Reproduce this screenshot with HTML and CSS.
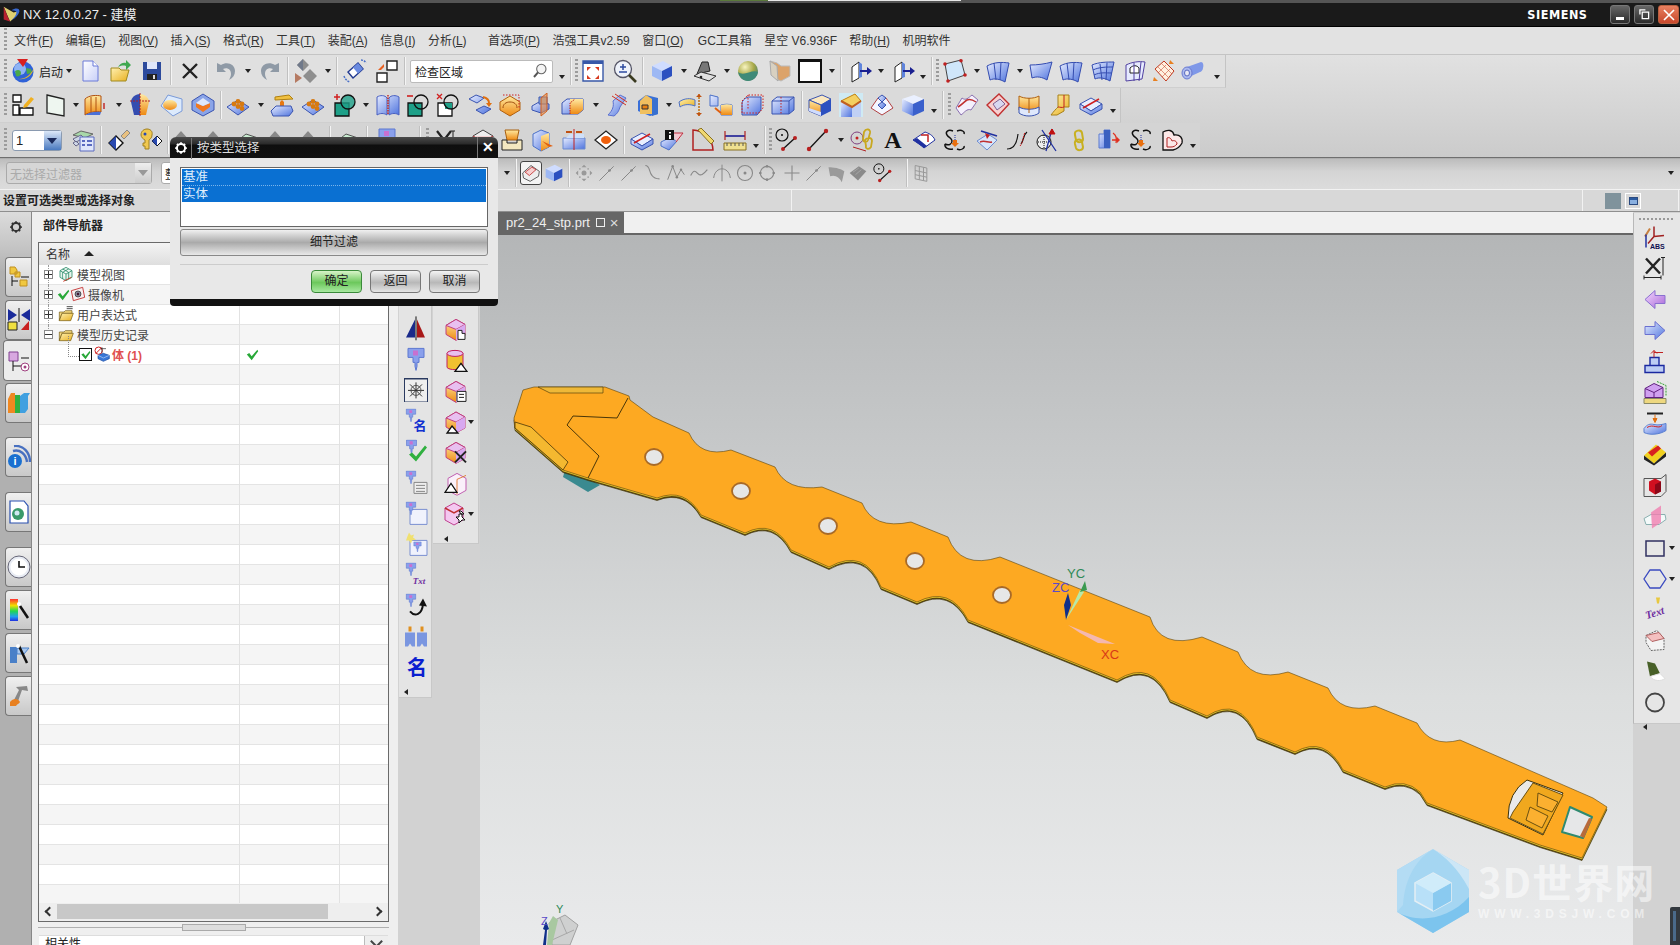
FILE: index.html
```html
<!DOCTYPE html>
<html lang="zh"><head><meta charset="utf-8"><title>NX 12 - 建模</title><link rel="stylesheet" href="styles.css"></head>
<body>
<svg class="defs" aria-hidden="true">
<defs>
<linearGradient id="gb" x1="0" y1="0" x2="1" y2="1"><stop offset="0" stop-color="#e6ecff"/><stop offset="1" stop-color="#4f74de"/></linearGradient>
<linearGradient id="gl" x1="0" y1="0" x2="1" y2="1"><stop offset="0" stop-color="#fff"/><stop offset="1" stop-color="#c8d0f8"/></linearGradient>
<linearGradient id="go" x1="0" y1="0" x2="0" y2="1"><stop offset="0" stop-color="#ffe9a0"/><stop offset="1" stop-color="#ee8a14"/></linearGradient>
<linearGradient id="gp" x1="0" y1="0" x2="1" y2="1"><stop offset="0" stop-color="#f4d8ff"/><stop offset="1" stop-color="#a868d8"/></linearGradient>
<linearGradient id="gf" x1="0" y1="0" x2="1" y2="1"><stop offset="0" stop-color="#fff0b0"/><stop offset="1" stop-color="#e8b020"/></linearGradient>
<linearGradient id="gr" x1="0" y1="0" x2="0" y2="1"><stop offset="0" stop-color="#ff3030"/><stop offset=".3" stop-color="#f0e000"/><stop offset=".55" stop-color="#20d850"/><stop offset=".8" stop-color="#20a0f0"/><stop offset="1" stop-color="#2030e0"/></linearGradient>
<radialGradient id="gs" cx=".35" cy=".3" r=".8"><stop offset="0" stop-color="#f8f4c0"/><stop offset=".55" stop-color="#a8a848"/><stop offset="1" stop-color="#3a7a70"/></radialGradient>
</defs>
<symbol id="globe" viewBox="0 0 24 24"><circle cx="12" cy="13" r="10.500" fill="#2f62d8"/><circle cx="9" cy="10" r="6" fill="#8fb4f4"/><path d="M4 12c3-2 6-1 6 2s-3 4-5 3zM15 9l5 1 1 4-5 1z" fill="#4aa84a"/><path d="M1 17c6 6 17 3 22-8-3 12-15 14-22 8z" fill="#f0c020"/><path d="M6 0h11l-5 8z" fill="#d82020"/></symbol>
<symbol id="doc" viewBox="0 0 24 24"><path d="M5 2h10l5 5v15H5z" fill="url(#gl)" stroke="#6a7ad8"/><path d="M15 2v5h5" fill="#fff" stroke="#6a7ad8"/></symbol>
<symbol id="folder" viewBox="0 0 24 24"><path d="M2 9h8l2 2h8l-3 11H2z" fill="url(#gf)" stroke="#a08a20"/><path d="M9 8c2-4 6-5 8-4V1l5 5-5 5V7c-3-1-6 0-8 1z" fill="#40a850"/></symbol>
<symbol id="fold0" viewBox="0 0 24 24"><path d="M2 9h7l2-2h10v4H6L2 22z" fill="#f4d880" stroke="#705810"/><path d="M6 11h17l-4 11H2z" fill="url(#gf)" stroke="#705810"/></symbol>
<symbol id="fold1" viewBox="0 0 24 24"><use href="#fold0"/><path d="M13 1h9M13 4h9" stroke="#333" stroke-width="1.300"/></symbol>
<symbol id="mv" viewBox="0 0 24 24"><path d="M12 2 21 7v10l-9 5-9-5V7zM3 7l9 5 9-5M12 12v10M7 4.500l9 5v10M16 4.500l-9 5v10" fill="#e4f4ec" stroke="#2a8a68" stroke-width="1.200"/><path d="M8 23 20 17" stroke="#d03020" stroke-width="1.400"/></symbol>
<symbol id="cam" viewBox="0 0 24 24"><path d="M2 7 19 2l3 15-17 5z" fill="#f8f0f0" stroke="#c02828" stroke-width="1.300"/><circle cx="12" cy="12" r="4.500" fill="#8a8a9a" stroke="#222"/><circle cx="12" cy="12" r="1.800" fill="#401830"/></symbol>
<symbol id="bdy" viewBox="0 0 24 24"><circle cx="7" cy="7" r="5.500" fill="#fff" stroke="#d02020" stroke-width="1.500"/><path d="M3 11 11 3" stroke="#d02020" stroke-width="1.500"/><path d="M12 2v8M10 4h8" stroke="#222"/><path d="M6 14l8-3 9 3v5l-9 4-8-4z" fill="#3a78d8" stroke="#1a4aa0"/><path d="M6 14l8 4 9-4" stroke="#bcd4f8" fill="none"/></symbol>
<symbol id="save" viewBox="0 0 24 24"><path d="M3 3h18v18H3z" fill="#2c4a9c"/><path d="M7 3h10v7H7z" fill="#dfe6fa"/><path d="M7 15h10v6H7z" fill="#222"/><path d="M13 16h2v4h-2z" fill="#ddd"/></symbol>
<symbol id="xx" viewBox="0 0 24 24"><path d="M5 5l14 14M19 5 5 19" stroke="#222" stroke-width="2.400" fill="none"/></symbol>
<symbol id="undo" viewBox="0 0 24 24"><path d="M3 4v9h9l-3-3c4-2 8 0 8 5 0 2-1 4-2 6 4-2 6-5 6-9 0-7-8-10-14-6z" fill="#8f9aa6"/></symbol>
<symbol id="redo" viewBox="0 0 24 24"><path d="M21 4v9h-9l3-3c-4-2-8 0-8 5 0 2 1 4 2 6-4-2-6-5-6-9 0-7 8-10 14-6z" fill="#8f9aa6"/></symbol>
<symbol id="snap" viewBox="0 0 24 24"><path d="M9 0l6 6-6 6-6-6zM16 10l7 7-7 7-7-7z" fill="#8e8e8e"/><path d="M1 14l7 5-7 5z" fill="#b57a62"/><path d="M9 0v12L3 6z" fill="#70798a"/></symbol>
<symbol id="iso" viewBox="0 0 24 24"><path d="M5 13 15 4l5 6-10 9z" fill="#fff" stroke="#223a90" stroke-width="1.400"/><path d="M10 8.500 15 4l5 6-5 4.500z" fill="#6a8ae0"/><path d="M1 17c1 3 3 5 6 6M18 1c2 0 4 1 5 3" stroke="#4a70c8" stroke-width="1.500" stroke-dasharray="2 1" fill="none"/></symbol>
<symbol id="win2" viewBox="0 0 24 24"><path d="M12 2h10v9H12zM2 14h10v9H2z" fill="#fff" stroke="#222" stroke-width="1.400"/><path d="M3 11 9 5v3l-3 3z" fill="#e86020"/></symbol>
<symbol id="mag" viewBox="0 0 24 24"><circle cx="14" cy="9" r="7" fill="#f4f4f4" stroke="#666" stroke-width="1.600"/><path d="M9 14 3 21" stroke="#555" stroke-width="3"/></symbol>
<symbol id="fit" viewBox="0 0 24 24"><path d="M2 2h20v20H2z" fill="#fff" stroke="#3858a8" stroke-width="1.400"/><path d="M2 2h20v3H2z" fill="#3858a8"/><path d="M6 8h4L6 12zM18 8h-4l4 4zM6 20h4l-4-4zM18 20h-4l4-4z" fill="#d83a20"/></symbol>
<symbol id="zoomi" viewBox="0 0 24 24"><circle cx="10" cy="10" r="8.500" fill="#eef2fa" stroke="#556" stroke-width="1.300"/><path d="M10 5v6M7 8h6M6 13h8" stroke="#2d4aa0" stroke-width="1.500"/><path d="M16 16l7 7" stroke="#3a3a20" stroke-width="2.600"/></symbol>
<symbol id="cube" viewBox="0 0 24 24"><path d="M2 7 13 2l9 5-10 5z" fill="#cfdcff"/><path d="M2 7l10 5v10L2 17z" fill="#9db8f4"/><path d="M12 12l10-5v10l-10 5z" fill="#2c50c0"/></symbol>
<symbol id="stamp" viewBox="0 0 24 24"><path d="M4 15 9 3h6l2 9z" fill="#777" stroke="#222"/><path d="M1 17 8 13 23 17 16 22z" fill="#e0e0e0" stroke="#333"/><circle cx="8" cy="18" r="1.300" fill="#222"/></symbol>
<symbol id="sphere" viewBox="0 0 24 24"><circle cx="12" cy="12" r="10" fill="url(#gs)"/><path d="M2 13c6 5 14-3 20 0-1 5-5 9-10 9s-9-4-10-9z" fill="#3f8a78"/></symbol>
<symbol id="pane" viewBox="0 0 24 24"><path d="M3 2l7 2 4 3h9v10l-9 5-5-2z" fill="#dca36a" stroke="#bbb"/><path d="M3 2l7 5 1 15-7-6z" fill="#d8d0c0" stroke="#aaa"/></symbol>
<symbol id="wbox" viewBox="0 0 24 24"><path d="M0 0h24v24H0z" fill="#111"/><path d="M2 3h20v19H2z" fill="#fff"/></symbol>
<symbol id="bfa" viewBox="0 0 24 24"><path d="M2 8l7-5v16l-7 4z" fill="#fff" stroke="#222"/><path d="M9 3l3 2v13l-3 1z" fill="#5f84dc"/><path d="M10 12h9" stroke="#1a2090" stroke-width="2"/><path d="M17 8l5 4-5 4z" fill="#1a2090"/></symbol>
<symbol id="rsurf" viewBox="0 0 24 24"><path d="M2 5 18 1l4 15-17 6z" fill="#cfe6fa" stroke="#444"/><g fill="#c02020"><circle cx="2" cy="5" r="1.800"/><circle cx="18" cy="1.800" r="1.800"/><circle cx="22" cy="16" r="1.800"/><circle cx="5" cy="22" r="1.800"/></g></symbol>
<symbol id="surfa" viewBox="0 0 24 24"><path d="M1 7c7-4 15-4 22-3l-4 19c-5-3-11-4-15-2z" fill="url(#gb)" stroke="#344cb0"/><path d="M8 4l2 17M15 3l-1 18" stroke="#344cb0" fill="none"/></symbol>
<symbol id="surfb" viewBox="0 0 24 24"><path d="M1 6c7 0 15-1 22-3l-5 18c-5-3-10-4-15-2z" fill="url(#gb)" stroke="#344cb0"/></symbol>
<symbol id="mesh" viewBox="0 0 24 24"><path d="M1 6c7-3 15-3 22-3l-4 19c-5-3-11-4-15-2z" fill="url(#gb)" stroke="#344cb0"/><path d="M2 11c6-3 14-3 20-3M3 16c6-3 12-2 18-2M9 5l2 16M16 4l-1 17" stroke="#344cb0" fill="none"/></symbol>
<symbol id="trim" viewBox="0 0 24 24"><path d="M3 6c6-3 13-4 19-3l-3 17-16 2z" fill="#e6eaff" stroke="#5040a0"/><path d="M7 9c3-3 7-3 9 0v5H7z" fill="#fff" stroke="#222"/><path d="M11 4v18M18 3l-2 19" stroke="#5040a0" fill="none"/></symbol>
<symbol id="warp" viewBox="0 0 24 24"><path d="M3 10 12 2l10 10-8 10z" fill="#fff0e0" stroke="#c03a20"/><path d="M6 8l10 10M10 5l10 10M6 14l8-8M10 18l8-8" stroke="#c03a20" stroke-width=".5"/><path d="M18 1l4 4h-5zM2 18l4 4H1z" fill="#e88020"/></symbol>
<symbol id="tube" viewBox="0 0 24 24"><path d="M6 8 20 3c2 0 3 3 2 6 0 2-2 4-3 4L6 19z" fill="#7f98e8"/><ellipse cx="6" cy="14" rx="5" ry="6" fill="#aab8ee" stroke="#6a7ad0"/><ellipse cx="6" cy="14" rx="2.500" ry="3" fill="#e8e8f4" stroke="#5a6ac0"/></symbol>
<symbol id="asm" viewBox="0 0 24 24"><path d="M2 2h8v7H2zM2 12h6v10H2zM9 15h13v7H9z" fill="#fff" stroke="#111" stroke-width="1.300"/><path d="M13 12 20 4l3 2-7 8-4 1z" fill="#f0b020"/></symbol>
<symbol id="sheet" viewBox="0 0 24 24"><path d="M4 2l17 4v17L4 20z" fill="#eef6f0" stroke="#222" stroke-width="1.300"/></symbol>
<symbol id="ext" viewBox="0 0 24 24"><path d="M1 6c4-4 12-4 16-3v16c-4-1-12 0-16 3z" fill="url(#go)" stroke="#b05010"/><path d="M7 4v16M12 4v15" stroke="#b05010" fill="none"/><path d="M1 22c4-3 12-4 16-3l-1 3H3z" fill="#4a70d8"/><path d="M20 16v-6" stroke="#c02020" stroke-width="1.400"/></symbol>
<symbol id="rev" viewBox="0 0 24 24"><path d="M12 1C7 1 3 5 3 9l3 13h6z" fill="#344cb0"/><path d="M12 1c5 0 9 4 9 8l-3 13h-6z" fill="url(#go)"/><path d="M12 0v24M2 8h20" stroke="#b02020" stroke-dasharray="2 1" fill="none"/></symbol>
<symbol id="oval" viewBox="0 0 24 24"><path d="M2 13 9 2l14 4v12l-9 5z" fill="#dceafc" stroke="#7a9ad8"/><ellipse cx="11" cy="12" rx="7" ry="5" fill="url(#go)"/></symbol>
<symbol id="pock" viewBox="0 0 24 24"><path d="M12 1 23 8v9l-11 6L1 17V8z" fill="#8aa4e8" stroke="#3a54b0"/><path d="M5 10l7 3 7-3v4l-7 5-7-5z" fill="#f07820"/><path d="M12 5l7 5-7 3-7-3z" fill="#dfe8fc"/></symbol>
<symbol id="pad" viewBox="0 0 24 24"><path d="M1 14 12 7l11 7-11 8z" fill="url(#gb)" stroke="#3a54b0"/><g fill="#d87a10"><circle cx="8" cy="11" r="2.400"/><circle cx="12" cy="8.500" r="2.400"/><circle cx="12" cy="13.500" r="2.400"/><circle cx="16" cy="11" r="2.400"/><circle cx="16" cy="15.500" r="2.400"/></g></symbol>
<symbol id="lift" viewBox="0 0 24 24"><path d="M5 4 19 2l4 4-18 1z" fill="#f0c040" stroke="#b08010"/><path d="M10 14h4V9l-2-2-2 2z" fill="#e87810"/><path d="M1 18 6 13h15l2 5-4 5H3z" fill="url(#gb)" stroke="#3a54b0"/></symbol>
<symbol id="plus" viewBox="0 0 24 24"><path d="M2 10h14v13H2z" fill="#1ea088" stroke="#111" stroke-width="1.300"/><circle cx="15" cy="9" r="7" fill="#1ea088" fill-opacity=".8" stroke="#111" stroke-width="1.300"/><path d="M1 4h6M4 1v6" stroke="#d02020" stroke-width="1.500"/></symbol>
<symbol id="mir" viewBox="0 0 24 24"><path d="M1 4c3-2 8-2 10 1v17c-3-2-7-2-10 0zM23 4c-3-2-8-2-10 1v17c3-2 7-2 10 0z" fill="url(#gb)" stroke="#4a60c0"/><path d="M12 2v20" stroke="#c02020" stroke-dasharray="1.500 1" stroke-width="1.400"/></symbol>
<symbol id="minus" viewBox="0 0 24 24"><path d="M2 10h14v13H2z" fill="#1ea088" stroke="#111" stroke-width="1.300"/><circle cx="15" cy="9" r="7" fill="none" stroke="#111" stroke-width="1.300"/><path d="M1 3h6" stroke="#d02020" stroke-width="1.600"/></symbol>
<symbol id="crs" viewBox="0 0 24 24"><path d="M2 10h14v13H2z" fill="#fff" stroke="#111" stroke-width="1.300"/><path d="M9 10h7v6H9z" fill="#1ea088"/><circle cx="15" cy="9" r="7" fill="none" stroke="#111" stroke-width="1.300"/><path d="M1 1l5 5M6 1 1 6" stroke="#d02020" stroke-width="1.300"/></symbol>
<symbol id="move" viewBox="0 0 24 24"><path d="M1 6 8 2l8 3-7 5zM8 17l8-4 7 3-8 5z" fill="url(#gb)" stroke="#3a54b0"/><path d="M15 4c4 1 6 3 6 6" stroke="#e07010" stroke-width="2" fill="none"/><path d="M18 10h6l-3 4z" fill="#e07010"/></symbol>
<symbol id="shell" viewBox="0 0 24 24"><path d="M2 9 12 3l10 6v8l-10 6-10-6z" fill="url(#go)" stroke="#b06010"/><path d="M5 2h16v14" stroke="#d02020" stroke-dasharray="1.500 1.500" fill="none"/><path d="M5 15c0-4 3-6 7-6s7 2 7 6" stroke="#a05010" fill="none"/></symbol>
<symbol id="web" viewBox="0 0 24 24"><path d="M1 13l7-4 10 2v5l-8 4-9-3z" fill="url(#gb)" stroke="#3a54b0"/><path d="M8 4h8v7H8z" fill="#8ab0e0" stroke="#3a54b0"/><path d="M16 0 10 5v18l6-5z" fill="#f09040" fill-opacity=".6" stroke="#d06020"/></symbol>
<symbol id="split" viewBox="0 0 24 24"><path d="M1 10l5-4h16v11l-5 4H1z" fill="url(#gb)" stroke="#3a54b0"/><path d="M9 6h13v11l-5 4H9z" fill="url(#go)"/><path d="M9 21V10l5-4" stroke="#c02020" stroke-dasharray="1.500 1" fill="none"/></symbol>
<symbol id="ruled" viewBox="0 0 24 24"><path d="M3 22c5-5 6-9 5-14l7-6 6 3-6 9c-1 4-3 7-6 9z" fill="url(#gb)" stroke="#5a70d0"/><path d="M7 3l14 9M10 1l12 8" stroke="#d03020"/></symbol>
<symbol id="fold" viewBox="0 0 24 24"><path d="M2 8 10 2l12 3v16l-8 2-12-5z" fill="#3a70d8"/><path d="M10 2l6 4v15H4V8z" fill="#f0c060"/><path d="M6 12h6v4H6z" fill="#e88010" stroke="#333"/><path d="M16 6l6-1v16l-6 2z" fill="#3870d0"/></symbol>
<symbol id="bend" viewBox="0 0 24 24"><path d="M1 9c5-4 12-4 16-2v6c-5-2-11-2-15 1z" fill="url(#gf)" stroke="#4a70c8"/><path d="M21 1v22" stroke="#c07010" stroke-dasharray="2 1" stroke-width="1.500"/><path d="M18 4l3-3 3 3zM18 20l3 3 3-3z" fill="#c05010"/></symbol>
<symbol id="dashc" viewBox="0 0 24 24"><path d="M1 2l8 2v9H1zM12 12c4-1 8-1 11 0v10H12z" fill="url(#gb)" stroke="#4a70c8"/><path d="M12 12c4-1 8-1 11 0v10H12z" fill="url(#go)"/><path d="M6 15l6 5" stroke="#e06010" stroke-width="2"/></symbol>
<symbol id="wcube" viewBox="0 0 24 24"><path d="M2 11c0-4 4-7 8-7h11v13l-4 5H2z" fill="url(#gb)" stroke="#3a54b0"/><path d="M2 8l6-6h15v13l-4 5H2zM8 2v14" stroke="#d02020" stroke-dasharray="1.500 1.500" fill="none"/></symbol>
<symbol id="cbox" viewBox="0 0 24 24"><path d="M1 8l5-4h17v13l-5 4H1z" fill="url(#gb)" stroke="#3a54b0"/><path d="M1 8h17v13M18 8l5-4" stroke="#3a54b0" fill="none"/><path d="M10 4v17" stroke="#c02020" stroke-dasharray="1.500 1.500"/></symbol>
<symbol id="box1" viewBox="0 0 24 24"><path d="M1 7 14 2l9 4-10 6z" fill="#fbe8c0" stroke="#3a54b0"/><path d="M1 7l12 5v11L1 18z" fill="url(#go)" stroke="#3a54b0"/><path d="M13 12l10-6v12l-10 5z" fill="#2c50c0"/><path d="M1 15l12 4v4L1 18z" fill="#cfdcff"/></symbol>
<symbol id="box2" viewBox="0 0 24 24"><path d="M0 0h24v24H0z" fill="#cfeaf4"/><path d="M2 8 16 1l6 7-9 6z" fill="#f4d060" stroke="#c08010"/><path d="M2 8l11 6v10H2z" fill="url(#gb)"/><path d="M13 14l9-6v16h-9z" fill="#c0d0f4"/><path d="M2 8l11 6 9-6" stroke="#c06020" stroke-width="2" fill="none"/></symbol>
<symbol id="pyr" viewBox="0 0 24 24"><path d="M1 15 8 5h8l7 10-11 7z" fill="#f4f6ff" stroke="#b04040"/><path d="M8 5l4 4 4-4-4-3zM8 12l4-3 4 3-4 4z" fill="url(#gb)" stroke="#3a54b0"/></symbol>
<symbol id="box3" viewBox="0 0 24 24"><path d="M1 6 13 2l10 4-11 5z" fill="#eaf0ff"/><path d="M1 6l11 5v12L1 18z" fill="url(#gb)"/><path d="M12 11l11-5v12l-11 5z" fill="#3a60cc"/></symbol>
<symbol id="wave" viewBox="0 0 24 24"><path d="M1 15 7 5c4 3 6 0 10-3l6 5-7 10c-4-2-7 3-10 5z" fill="#f4f0fc" stroke="#8a70b0"/><path d="M3 14c5-3 7-6 9-7 3-1 6 0 9 2" stroke="#c03030" stroke-width="1.500" fill="none"/></symbol>
<symbol id="patch" viewBox="0 0 24 24"><path d="M1 12 13 1l10 10-11 12z" fill="#f8d0d0" stroke="#c03030" stroke-width="1.400"/><path d="M7 11l7-5 5 5-8 6z" fill="#d8d8f0" stroke="#806090"/></symbol>
<symbol id="band" viewBox="0 0 24 24"><path d="M2 3c5 3 15 3 20 0v14c-5 3-15 3-20 0z" fill="url(#go)" stroke="#b06010"/><path d="M2 14c5 3 15 3 20 0v6c-5 4-15 4-20 0z" fill="#dfe8fc" stroke="#3a54b0"/><path d="M12 5v15" stroke="#b06010"/></symbol>
<symbol id="step" viewBox="0 0 24 24"><path d="M9 2h11v12h-5v4l-7 4H2c3-4 5-6 7-8z" fill="url(#gf)" stroke="#a88018"/><path d="M9 14c2 0 4 1 6 0M15 2v12" stroke="#c02020" fill="none"/></symbol>
<symbol id="slice" viewBox="0 0 24 24"><path d="M1 11 12 5l11 6-11 7z" fill="#e8eeff" stroke="#3a54b0"/><path d="M1 11v5l11 6 11-6v-5l-11 7z" fill="url(#gb)" stroke="#3a54b0"/><path d="M4 15 20 6" stroke="#d02020" stroke-width="1.500"/></symbol>
<symbol id="layers" viewBox="0 0 24 24"><path d="M2 7 10 3l12 3-8 4z" fill="#a8d8a8" stroke="#666"/><path d="M2 11l8-4 3 3-8 4zM2 15l3-2 3 3-3 2z" fill="#cfd8e8" stroke="#668"/><path d="M9 9h14v14H9z" fill="#dfe6fa" stroke="#5a6ac0"/><path d="M11 12h3v2h-3zM16 12h5v2h-5zM11 16h3v2h-3zM16 16h5v2h-5z" fill="#5a6ac0"/></symbol>
<symbol id="wand" viewBox="0 0 24 24"><path d="M2 15l7-7 7 7-7 7z" fill="#fff" stroke="#111" stroke-width="1.400"/><path d="M2 15l7-7v14z" fill="#2a4ab0"/><path d="M14 8l6-6 3 3-6 6z" fill="#e8c080" stroke="#888"/></symbol>
<symbol id="key" viewBox="0 0 24 24"><path d="M3 7c0-4 3-6 6-6s6 2 5 6c0 3-2 4-3 5v9H7v-3H5v-3h2v-3c-2-1-4-3-4-5z" fill="#f0c850" stroke="#a08020"/><circle cx="7" cy="6" r="1.500" fill="#2a4ab0"/><path d="M14 13l5-5 5 5-5 5z" fill="#fff" stroke="#111"/><path d="M14 13l5-5v10z" fill="#2a4ab0"/></symbol>
<symbol id="dia" viewBox="0 0 24 24"><path d="M12 3 21 13 12 23 3 13z" fill="#888"/></symbol>
<symbol id="pl" viewBox="0 0 24 24"><path d="M1 13 10 6l12 4-9 8z" fill="#c8ecd0" stroke="#555"/></symbol>
<symbol id="xmk" viewBox="0 0 24 24"><path d="M2 3l14 18M16 3 2 21" stroke="#222" stroke-width="2.200"/><path d="M18 3v16M16 3h4M16 19h4" stroke="#222"/></symbol>
<symbol id="env" viewBox="0 0 24 24"><path d="M2 8 12 2l10 6v14H2z" fill="#eee" stroke="#444"/><path d="M2 8l10 6 10-6" stroke="#b03030" fill="#f0d0d0"/></symbol>
<symbol id="tray" viewBox="0 0 24 24"><path d="M5 2h14l-2 10H7z" fill="url(#go)" stroke="#a86010"/><path d="M2 12h5v3h10v-3h5v10H2z" fill="#f4e8c0" stroke="#222"/></symbol>
<symbol id="cubeo" viewBox="0 0 24 24"><path d="M2 6 10 2l8 3v14l-8 4-8-5z" fill="url(#gb)" stroke="#4a70c8"/><path d="M10 8l8-3v14l-8 4z" fill="url(#go)"/><path d="M11 13l11 5-4 1z" fill="#e06010"/></symbol>
<symbol id="div" viewBox="0 0 24 24"><path d="M1 10h22v11H1z" fill="url(#gb)" stroke="#6a8ad0"/><path d="M4 10l4-4h14v4" fill="#cfe0fa"/><path d="M12 1v21" stroke="#c02020"/><path d="M4 4h6M20 4h-6" stroke="#c05010" stroke-width="2"/></symbol>
<symbol id="eyed" viewBox="0 0 24 24"><path d="M1 12 12 3l11 9-11 9z" fill="#fff" stroke="#222" stroke-width="1.300"/><ellipse cx="12" cy="12" rx="5" ry="4" fill="#f0600c"/></symbol>
<symbol id="info" viewBox="0 0 24 24"><path d="M1 14l8-4 8 3-8 9-8-4z" fill="url(#gb)" stroke="#4a70c8"/><path d="M5 2h9v10H5z" fill="#111"/><path d="M9 4h2v1.500H9zM9 7h2v4H9z" fill="#fff"/><path d="M14 5h9l-7 9" stroke="#c03040" fill="#f4c8d0"/></symbol>
<symbol id="ang" viewBox="0 0 24 24"><path d="M2 2v20h20C22 12 12 2 2 2z" fill="none" stroke="#b02020" stroke-width="1.500"/><path d="M7 2l3-2 13 13-3 3z" fill="#f0d870" stroke="#887020"/></symbol>
<symbol id="dim" viewBox="0 0 24 24"><path d="M1 15h22v7H1z" fill="#efe090" stroke="#887020"/><path d="M4 15v3M8 15v3M12 15v3M16 15v3M20 15v3" stroke="#555"/><path d="M2 8h20" stroke="#101090" stroke-width="1.500"/><path d="M2 3v9M22 3v9" stroke="#b02020" stroke-width="1.200"/></symbol>
<symbol id="ptl" viewBox="0 0 24 24"><circle cx="7" cy="7" r="6" fill="none" stroke="#111" stroke-width="1.200"/><circle cx="7" cy="7" r="1" fill="#111"/><path d="M8 21 20 10" stroke="#111" stroke-width="1.300"/><circle cx="8" cy="21" r="2" fill="#b82020"/><circle cx="20" cy="10" r="2" fill="#b82020"/></symbol>
<symbol id="ln" viewBox="0 0 24 24"><path d="M3 21 20 3" stroke="#111" stroke-width="1.300"/><circle cx="3" cy="21" r="2.200" fill="#b82020"/><circle cx="20" cy="3" r="2.200" fill="#b82020"/></symbol>
<symbol id="chn" viewBox="0 0 24 24"><circle cx="7" cy="10" r="6" fill="none" stroke="#804080"/><circle cx="7" cy="10" r="1.500" fill="#c02020"/><path d="M3 19l13 4" stroke="#b02020"/><path d="M14 4c2-4 7-3 6 1l-2 7c-1 3-5 2-5-1zM15 12c2-3 7-3 7 1l-1 6c-2 3-6 2-5-1z" fill="none" stroke="#c8a820" stroke-width="1.800"/></symbol>
<symbol id="sf1" viewBox="0 0 24 24"><path d="M1 12 13 4c3 1 8 3 10 8l-11 8c-3-3-8-6-11-8z" fill="#fff" stroke="#2030a0"/><path d="M1 12l11 8 3-2-10-8z" fill="#2030a0"/><path d="M9 7h7v7" stroke="#c02020" stroke-width="1.500" fill="none"/></symbol>
<symbol id="cv1" viewBox="0 0 24 24"><path d="M10 3C5 1 2 4 4 7s5 3 5 6-3 5-7 3M14 3c5-2 8 1 7 3M14 21c4 2 8-1 7-3M2 16c-1 4 4 6 8 5" stroke="#111" stroke-width="1.400" fill="none"/><path d="M12 7v9" stroke="#2030a0" stroke-dasharray="1 1"/><path d="M10 12h4v3h2l-4 4-4-4h2z" fill="#e87010"/></symbol>
<symbol id="sf2" viewBox="0 0 24 24"><path d="M2 13 13 6l9 6-10 10z" fill="#d8e6fa" stroke="#6a8ad0"/><path d="M5 14c5-2 8 1 12 0" stroke="#c03030" stroke-width="1.500" fill="none"/><path d="M6 3 22 8" stroke="#2030a0" stroke-width="1.500"/><path d="M10 5l2 6 3-4z" fill="#c02020"/></symbol>
<symbol id="cv2" viewBox="0 0 24 24"><path d="M2 21c7 0 10-6 11-15M22 4c-4 3-3 8-6 12" stroke="#111" stroke-width="1.200" fill="none"/><path d="M15 18c3-3 3-9 5-14" stroke="#d02020" stroke-dasharray="2 1" fill="none"/></symbol>
<symbol id="sph2" viewBox="0 0 24 24"><circle cx="8" cy="14" r="7" fill="#eee" stroke="#111"/><path d="M2 14h12M8 7v14" stroke="#111" stroke-dasharray="1 1"/><path d="M6 2 20 23M16 1 10 23" stroke="#2030a0" stroke-width="1.300"/><path d="M16 6V1m-3 5 3-5 3 5z" fill="#c01010" stroke="#c01010"/></symbol>
<symbol id="chn2" viewBox="0 0 24 24"><path d="M8 7c-1-5 6-6 7-2l1 6c0 4-6 4-7 1zM8 16c-1-5 6-6 7-2l1 5c0 4-6 4-7 1z" fill="none" stroke="#c8b020" stroke-width="2"/></symbol>
<symbol id="cyla" viewBox="0 0 24 24"><path d="M2 6h5V2h6v18H2z" fill="url(#gb)" stroke="#5a7ad0"/><path d="M7 2h6v18H7z" fill="#3a60c0"/><path d="M16 5c3 2 4 6 3 10M15 12h7" stroke="#e03020" stroke-width="1.300" fill="none"/><path d="M20 9l3 3-3 3z" fill="#e03020"/></symbol>
<symbol id="hrt" viewBox="0 0 24 24"><path d="M3 4c5-3 10-2 11 3 6-1 9 3 8 8-2 4-5 6-9 7H3z" fill="#fce8e8" stroke="#111" stroke-width="1.300"/><path d="M7 10c2-1 4 0 5 3 2-1 5 0 5 3-2 2-3 3-6 3H7z" fill="none" stroke="#b02020"/></symbol>
<symbol id="gm" viewBox="0 0 24 24"><circle cx="12" cy="12" r="3" fill="#999"/><path d="M12 2l3 3h-6zM12 22l3-3H9zM2 12l3-3v6zM22 12l-3-3v6z" fill="#999"/><path d="M6 6h2v2H6zM16 6h2v2h-2zM6 16h2v2H6zM16 16h2v2h-2z" fill="#aaa"/></symbol>
<symbol id="gll" viewBox="0 0 24 24"><path d="M3 21 20 4" stroke="#888" stroke-width="1.200"/><circle cx="15" cy="9" r="1.600" fill="#888"/></symbol>
<symbol id="gs1" viewBox="0 0 24 24"><path d="M4 3c6 0 4 8 8 12 2 3 5 4 9 4" stroke="#888" stroke-width="1.300" fill="none"/></symbol>
<symbol id="gz" viewBox="0 0 24 24"><path d="M2 20 8 4l5 13 5-9 4 6" stroke="#888" stroke-width="1.200" fill="none"/><g fill="#888"><circle cx="8" cy="4" r="1.500"/><circle cx="13" cy="17" r="1.500"/><circle cx="18" cy="8" r="1.500"/></g></symbol>
<symbol id="gw" viewBox="0 0 24 24"><path d="M2 15c4-8 6-5 9-2s6 1 11-5" stroke="#888" stroke-width="1.400" fill="none"/></symbol>
<symbol id="gt" viewBox="0 0 24 24"><path d="M12 2v20M2 18C3 10 8 7 12 7s9 3 10 11" stroke="#888" stroke-width="1.200" fill="none"/></symbol>
<symbol id="gc" viewBox="0 0 24 24"><circle cx="12" cy="12" r="9" fill="none" stroke="#888" stroke-width="1.300"/><circle cx="12" cy="12" r="1.800" fill="#888"/></symbol>
<symbol id="go2" viewBox="0 0 24 24"><circle cx="12" cy="12" r="8" fill="none" stroke="#888" stroke-width="1.300"/><g fill="#888"><circle cx="12" cy="4" r="1.600"/><circle cx="4" cy="12" r="1.600"/><circle cx="20" cy="12" r="1.600"/><circle cx="12" cy="20" r="1.600"/></g></symbol>
<symbol id="gp1" viewBox="0 0 24 24"><path d="M12 3v18M3 12h18" stroke="#888" stroke-width="1.300"/></symbol>
<symbol id="gb1" viewBox="0 0 24 24"><path d="M3 5c6 0 14 1 19 5l-3 13c-3-6-8-9-14-7z" fill="#9a9a9a"/></symbol>
<symbol id="gb2" viewBox="0 0 24 24"><path d="M2 12 13 4l9 6-10 11z" fill="#8a8a8a"/><path d="M6 11l7-5M9 14l7-6" stroke="#aaa"/></symbol>
<symbol id="grid" viewBox="0 0 24 24"><path d="M5 3l14 3v16L5 19zM5 9l14 3M5 14l14 3M10 4v16M15 5v16" fill="none" stroke="#999" stroke-width="1.200"/></symbol>
<symbol id="selb" viewBox="0 0 24 24"><path d="M2 12 12 3l10 7-1 6-10 6-8-4z" fill="#eee" stroke="#444"/><path d="M5 11l8-6 5 3-8 7z" fill="#f8d0d0" stroke="#c03030"/></symbol>
<symbol id="gear" viewBox="0 0 24 24"><circle cx="12" cy="12" r="7" fill="none" stroke="currentColor" stroke-width="3.400"/><path d="M12 2v3M12 19v3M2 12h3M19 12h3M5 5l2 2M17 17l2 2M5 19l2-2M17 7l2-2" stroke="currentColor" stroke-width="3"/></symbol>
<symbol id="t-asm" viewBox="0 0 24 24"><path d="M3 2h5l2 3v4H3zM8 7h5v5H8z" fill="#f0c840" stroke="#c09020"/><path d="M5 11v10M5 16h6M14 12h8" stroke="#111" fill="none"/><path d="M13 15h7v6h-7z" fill="#f0c840" stroke="#c09020"/></symbol>
<symbol id="t-con" viewBox="0 0 24 24"><path d="M1 1l9 6-9 6zM23 1l-9 6 9 6z" fill="#1a2a9a"/><path d="M12 0v14" stroke="#111"/><path d="M1 14h9v8H1z" fill="#f0e040" stroke="#222"/><path d="M14 22 22 13v9z" fill="#c82020"/></symbol>
<symbol id="t-part" viewBox="0 0 24 24"><path d="M3 3h9v9H3z" fill="#d8a8e0" stroke="#804090"/><path d="M7 12v10M7 17h8M15 9h8" stroke="#111" fill="none"/><circle cx="19" cy="18" r="4" fill="#fff" stroke="#a04080"/><circle cx="19" cy="18" r="1.500" fill="#a04080"/></symbol>
<symbol id="t-book" viewBox="0 0 24 24"><path d="M1 8 4 2h4v20H1z" fill="#f08820"/><path d="M8 4h5v18H8z" fill="#30b040"/><path d="M13 5l4-3h6l-2 3v13l-3 4h-5z" fill="#40a0e0"/></symbol>
<symbol id="t-doc" viewBox="0 0 24 24"><path d="M3 1h14l4 5v17H3z" fill="#fff" stroke="#2a50b0" stroke-width="1.200"/><circle cx="11" cy="14" r="6" fill="#3a9a6a"/><circle cx="10" cy="13" r="2.500" fill="#d0e8f0"/></symbol>
<symbol id="t-clk" viewBox="0 0 24 24"><circle cx="12" cy="12" r="11" fill="#e8ecf4" stroke="#667"/><circle cx="12" cy="12" r="8.500" fill="#fff"/><path d="M12 6v6h6" stroke="#111" stroke-width="1.600" fill="none"/></symbol>
<symbol id="t-rb" viewBox="0 0 24 24"><path d="M3 1h8v22H3z" fill="url(#gr)"/><path d="M13 8l8 12" stroke="#111" stroke-width="2.500"/><circle cx="12" cy="6" r="2" fill="#fff"/></symbol>
<symbol id="t-mach" viewBox="0 0 24 24"><path d="M3 6h7v16H3z" fill="#4a80c8"/><path d="M10 7h12l-5 6h-7z" fill="#a8c8f0" stroke="#4a80c8"/><path d="M12 5l8 17" stroke="#111" stroke-width="2.500"/><circle cx="11" cy="5" r="2" fill="#fff"/></symbol>
<symbol id="t-tool" viewBox="0 0 24 24"><path d="M9 3l11-1 1 5-6-1-5 14c-1 2-5 1-4-2l6-12z" fill="#888"/><path d="M3 18c3-4 8-4 10 0-1 2-3 2-4 4H3z" fill="#e88020"/></symbol>
<symbol id="c-mirr" viewBox="0 0 24 24"><path d="M11 3v18L2 21z" fill="#1a2a8a"/><path d="M13 3v18h8z" fill="#a81818"/><path d="M12 0v24" stroke="#111"/></symbol>
<symbol id="c-nm" viewBox="0 0 24 24"><path d="M4 1h16v9h-5v5h-2v4l-1 4-1-4v-4H9v-5H4z" fill="#8aa0ec" stroke="#5c78d0"/><path d="M9 3h5v5H9z" fill="#c870d0"/></symbol>
<symbol id="c-box" viewBox="0 0 24 24"><path d="M0 0h24v24H0z" fill="#eee" stroke="#2a3a60" stroke-width="2"/><path d="M12 4v16M4 12h16M6 6l12 12M18 6 6 18" stroke="#333"/><circle cx="12" cy="12" r="5" fill="none" stroke="#555"/></symbol>
<symbol id="c-ck" viewBox="0 0 24 24"><use href="#c-nm" width="15" height="15"/><path d="M5 15l3-2 4 4 9-11 2 2-11 14z" fill="#30b040"/></symbol>
<symbol id="c-tb" viewBox="0 0 24 24"><use href="#c-nm" width="14" height="14"/><path d="M10 12h13v11H10z" fill="#eee" stroke="#888"/><path d="M12 15h9M12 18h9M12 21h9" stroke="#888"/></symbol>
<symbol id="c-pg" viewBox="0 0 24 24"><path d="M6 8h17v15H6z" fill="#f0f2fc" stroke="#7a90d0"/><use href="#c-nm" width="14" height="14"/></symbol>
<symbol id="c-nw" viewBox="0 0 24 24"><path d="M6 8h17v15H6z" fill="#f0f2fc" stroke="#7a90d0"/><path d="M5 0l2 3 3-1-1 3 3 2-4 1-1 3-2-3-3 0 1-3z" fill="#f0e070"/><use href="#c-nm" x="8" y="9" width="11" height="11"/></symbol>
<symbol id="c-rt" viewBox="0 0 24 24"><use href="#c-nm" width="14" height="14"/><path d="M6 18c5 6 12 3 13-7" stroke="#111" stroke-width="2" fill="none"/><path d="M15 12l4-7 4 8z" fill="#111"/></symbol>
<symbol id="c-2" viewBox="0 0 24 24"><path d="M6 2v5M18 2v5" stroke="#e09020" stroke-width="3"/><path d="M1 8h10v14H8l-2-3-2 3H1zM13 8h10v14h-3l-2-3-2 3h-3z" fill="#7a96e0"/></symbol>
<symbol id="cp-a" viewBox="0 0 24 24"><path d="M2 8 12 2l9 5v11l-9 5-10-6z" fill="url(#go)" stroke="#c04080"/><path d="M2 8l10-6 9 5-9 5z" fill="#e8c0f0" stroke="#c04080"/><path d="M12 12l9-5v11l-9 5z" fill="#d8a8f0"/></symbol>
<symbol id="cp-b" viewBox="0 0 24 24"><use href="#cp-a"/><path d="M14 13h4v3h3v6h-7z" fill="#fff" stroke="#222"/></symbol>
<symbol id="cp-c" viewBox="0 0 24 24"><path d="M3 5c2-3 14-3 16 0v14c-2 3-14 3-16 0z" fill="#f0c030" stroke="#c02060"/><ellipse cx="11" cy="5" rx="8" ry="3" fill="#e8c0f0" stroke="#c02060"/><path d="M17 15l6 8H11z" fill="#fff" stroke="#111" stroke-width="1.300"/></symbol>
<symbol id="cp-d" viewBox="0 0 24 24"><use href="#cp-a"/><path d="M13 12h9v10h-9z" fill="#fff" stroke="#222"/><path d="M15 15h5M15 18h5" stroke="#222"/></symbol>
<symbol id="cp-e" viewBox="0 0 24 24"><use href="#cp-a"/><path d="M8 16l6 7H3z" fill="#fff" stroke="#111" stroke-width="1.300"/></symbol>
<symbol id="cp-f" viewBox="0 0 24 24"><use href="#cp-a"/><path d="M11 11l11 11M22 11 11 22" stroke="#222" stroke-width="2"/></symbol>
<symbol id="cp-g" viewBox="0 0 24 24"><path d="M4 7 13 2l9 5v12l-9 5-9-5z" fill="#faf0fa" stroke="#c060b0"/><path d="M13 8v15M13 8l9-4" stroke="#e08040" fill="none"/><path d="M7 12l6 9H1z" fill="#fff" stroke="#111" stroke-width="1.200"/></symbol>
<symbol id="cp-h" viewBox="0 0 24 24"><path d="M1 6 10 1l9 5v12l-9 5-9-5z" fill="#f4c8f0" stroke="#c04090"/><path d="M1 6l9 5 9-5" stroke="#c03030" stroke-width="1.500" fill="none"/><path d="M15 9l2 3h3l-3-3 0 0zM15 12v3h-3l3 3v3l3-3h3l-3-3v-3z" fill="#fff" stroke="#111"/></symbol>
<symbol id="r-x" viewBox="0 0 24 24"><path d="M3 2l14 15M17 2 3 17" stroke="#222" stroke-width="2.500"/><path d="M20 1v18M18 1h4M1 21h17M1 19v4M18 19v4" stroke="#222"/></symbol>
<symbol id="r-l" viewBox="0 0 24 24"><path d="M2 12l10-9v5h10v8H12v5z" fill="url(#gp)" stroke="#8a70d0"/></symbol>
<symbol id="r-r" viewBox="0 0 24 24"><path d="M22 12l-10-9v5H2v8h10v5z" fill="url(#gb)" stroke="#6a70d0"/></symbol>
<symbol id="r-bs" viewBox="0 0 24 24"><path d="M2 16h19v7H2zM7 8h9v8H7z" fill="#bcccf4" stroke="#1a28a0" stroke-width="1.400"/><path d="M11 8V1M11 1 8 4M11 1l3 3M11 3h9" stroke="#c02020" fill="none"/></symbol>
<symbol id="r-pc" viewBox="0 0 24 24"><path d="M2 8 11 3l9 4v10H2z" fill="#d0a0f0" stroke="#602080"/><path d="M2 8l9 4 9-5M11 12v5" stroke="#602080" fill="none"/><path d="M1 18h22v5H1z" fill="#eed880" stroke="#886"/><path d="M14 1l9 4v10" stroke="#30a030" stroke-dasharray="2 1" fill="none"/></symbol>
<symbol id="r-xs" viewBox="0 0 24 24"><path d="M1 17c3-4 6-5 10-4 4 1 8 0 12-1v7c-6 4-16 5-22 2z" fill="url(#gb)" stroke="#5a80d0"/><path d="M4 2h16" stroke="#222" stroke-width="2"/><path d="M12 3v6M10 7l2 4 2-4z" fill="#e07010" stroke="#e07010"/><path d="M4 16c6-4 11 2 15-2" stroke="#d02020" fill="none"/></symbol>
<symbol id="r-st" viewBox="0 0 24 24"><path d="M1 13 13 2l10 8-12 11z" fill="#f0d020"/><path d="M5 10 15 3l3 3L9 14z" fill="#d82020"/><path d="M1 13l10 8 12-11v4L11 23 1 17z" fill="#222"/></symbol>
<symbol id="r-rc" viewBox="0 0 24 24"><path d="M1 5h17l5-4v17l-5 5H1z" fill="none" stroke="#555"/><path d="M6 8l6-3 6 3v10l-6 3-6-4z" fill="#d01020"/><path d="M12 11l6-3v10l-6 3z" fill="#8a0818"/></symbol>
<symbol id="r-pk" viewBox="0 0 24 24"><path d="M1 14l7-4h14l1 5-7 5H3z" fill="#f4fafa" stroke="#8ab0b0"/><path d="M8 8 18 1v17l-9 6z" fill="#f080b0" fill-opacity=".8"/></symbol>
<symbol id="r-rect" viewBox="0 0 24 24"><path d="M3 5h18v15H3z" fill="none" stroke="#303060" stroke-width="1.500"/></symbol>
<symbol id="r-hex" viewBox="0 0 24 24"><path d="M7 3h10l6 9-6 9H7l-6-9z" fill="none" stroke="#3a4ac0" stroke-width="1.300"/></symbol>
<symbol id="r-ds" viewBox="0 0 24 24"><path d="M3 7 14 2l7 8v11l-13 1-5-8z" fill="#f4f4f4" stroke="#666" stroke-dasharray="2 1"/><path d="M3 7l13-3 5 6-12 3z" fill="#f4c0c0" stroke="#b06060"/></symbol>
<symbol id="r-lp" viewBox="0 0 24 24"><path d="M4 2l8 2 5 10-10 3z" fill="#486028"/><path d="M7 17l10-3 5 5c-4 3-11 3-15-2z" fill="#fff" stroke="#ddd"/></symbol>
<symbol id="r-c" viewBox="0 0 24 24"><circle cx="12" cy="12" r="9" fill="none" stroke="#444" stroke-width="1.800"/></symbol>
<symbol id="logo" viewBox="0 0 24 24"><path d="M1 1l14 8 8-2-6 9-7 6-3-7z" fill="#e0d070"/><path d="M1 1l6 15 3 6-9-3z" fill="#b82030"/><path d="M12 6c6-4 12-3 11 2-1 4-5 9-11 12 4-4 7-8 7-11 0-2-3-3-7-3z" fill="#3a6ad0"/></symbol>
</svg>

<header class="titlebar">
  <svg class="tlogo"><use href="#logo"/></svg>
  <span class="ttext">NX 12.0.0.27 - 建模</span>
  <span class="brand">SIEMENS</span>
  <span class="wb"><i class="wmin"></i></span>
  <span class="wb"><svg class="wsv" viewBox="0 0 12 12"><path d="M3.500 3.500h7v7h-7zM1 6V1h6" fill="none" stroke="#fff" stroke-width="1.400"/></svg></span>
  <span class="wb wclose"><svg class="wsv2" viewBox="0 0 12 12"><path d="M1 1l10 10M11 1 1 11" stroke="#fff" stroke-width="1.600"/></svg></span>
</header>

<nav class="menu">
  <i class="grip"></i>
  <span class="mi first">文件(<u>F</u>)</span><span class="mi">编辑(<u>E</u>)</span><span class="mi">视图(<u>V</u>)</span><span class="mi">插入(<u>S</u>)</span><span class="mi">格式(<u>R</u>)</span><span class="mi">工具(<u>T</u>)</span><span class="mi">装配(<u>A</u>)</span><span class="mi">信息(<u>I</u>)</span><span class="mi">分析(<u>L</u>)</span><span class="mi pref">首选项(<u>P</u>)</span><span class="mi">浩强工具v2.59</span><span class="mi">窗口(<u>O</u>)</span><span class="mi gc">GC工具箱</span><span class="mi">星空 V6.936F</span><span class="mi">帮助(<u>H</u>)</span><span class="mi">机明软件</span>
</nav>

<section class="toolbars">
  <div class="row r1">
    <i class="grip"></i>
    <svg class="i m4"><use href="#globe"/></svg><span class="btxt m4">启动</span><i class="a m3"></i>
    <svg class="i m6"><use href="#doc"/></svg><svg class="i m7"><use href="#folder"/></svg><svg class="i m7"><use href="#save"/></svg><i class="sp m7"></i>
    <svg class="i m6"><use href="#xx"/></svg><i class="sp m5"></i>
    <svg class="i m6"><use href="#undo"/></svg><i class="a m7"></i><svg class="i m7"><use href="#redo"/></svg><i class="sp m6"></i>
    <svg class="i m5"><use href="#snap"/></svg><i class="a m7"></i><i class="sp m6"></i>
    <svg class="i m5"><use href="#iso"/></svg><svg class="i m8"><use href="#win2"/></svg><i class="sp m6"></i>
    <div class="search m4"><span>检查区域</span><svg class="smag"><use href="#mag"/></svg></div><i class="a low m6"></i><i class="sp m6"></i>
    <i class="grip m3"></i><svg class="i m3"><use href="#fit"/></svg><svg class="i m8"><use href="#zoomi"/></svg><i class="sp m6"></i>
    <svg class="i m6"><use href="#cube"/></svg><i class="a m7"></i><svg class="i m6"><use href="#stamp"/></svg><i class="a m7"></i><svg class="i m6"><use href="#sphere"/></svg><svg class="i m7"><use href="#pane"/></svg><svg class="i m7"><use href="#wbox"/></svg><i class="a m7"></i><i class="sp m6"></i>
    <svg class="i m8"><use href="#bfa"/></svg><i class="a m4"></i><svg class="i m9"><use href="#bfa"/></svg><i class="a low m3"></i><i class="sp m6"></i>
    <i class="grip m3"></i><svg class="i m4"><use href="#rsurf"/></svg><i class="a m7"></i><svg class="i m6"><use href="#surfa"/></svg><i class="a m7"></i><svg class="i m6"><use href="#surfb"/></svg><svg class="i m6"><use href="#surfa"/></svg><svg class="i m8"><use href="#mesh"/></svg><svg class="i m8"><use href="#trim"/></svg><svg class="i m5"><use href="#warp"/></svg><svg class="i m5"><use href="#tube"/></svg><i class="a low m9"></i>
  </div>
  <div class="row r2">
    <i class="grip"></i>
    <svg class="i m4"><use href="#asm"/></svg><svg class="i m8"><use href="#sheet"/></svg><i class="a m6"></i><svg class="i m5"><use href="#ext"/></svg><i class="a m8"></i><svg class="i m6"><use href="#rev"/></svg><svg class="i m7"><use href="#oval"/></svg><svg class="i m8"><use href="#pock"/></svg><i class="sp m6"></i>
    <svg class="i m4"><use href="#pad"/></svg><i class="a m8"></i><svg class="i m6"><use href="#lift"/></svg><svg class="i m7"><use href="#pad"/></svg><svg class="i m8"><use href="#plus"/></svg><i class="a m6"></i><svg class="i m7"><use href="#mir"/></svg><svg class="i m6"><use href="#minus"/></svg><svg class="i m6"><use href="#crs"/></svg><svg class="i m8"><use href="#move"/></svg><svg class="i m6"><use href="#shell"/></svg><svg class="i m9"><use href="#web"/></svg><svg class="i m6"><use href="#split"/></svg><i class="a m8"></i><svg class="i m6"><use href="#ruled"/></svg><svg class="i m7"><use href="#fold"/></svg><i class="a m6"></i><svg class="i m6"><use href="#bend"/></svg><svg class="i m7"><use href="#dashc"/></svg><svg class="i m7"><use href="#wcube"/></svg><svg class="i m7"><use href="#cbox"/></svg><i class="sp m7"></i>
    <svg class="i m5"><use href="#box1"/></svg><svg class="i m7"><use href="#box2"/></svg><svg class="i m7"><use href="#pyr"/></svg><svg class="i m7"><use href="#box3"/></svg><i class="a low m6"></i><i class="sp m6"></i>
    <i class="grip m4"></i><svg class="i m4"><use href="#wave"/></svg><svg class="i m7"><use href="#patch"/></svg><svg class="i m7"><use href="#band"/></svg><svg class="i m8"><use href="#step"/></svg><svg class="i m6"><use href="#slice"/></svg><i class="a low m7"></i>
  </div>
  <div class="row r3">
    <i class="grip"></i>
    <div class="spin m5"><span>1</span><b class="sbtn"></b></div><svg class="i m9"><use href="#layers"/></svg><i class="sp m6"></i>
    <svg class="i m5"><use href="#wand"/></svg><svg class="i m7"><use href="#key"/></svg><i class="sp m6"></i>
    <svg class="i"><use href="#dia"/></svg><svg class="i m8"><use href="#dia"/></svg><svg class="i m11"><use href="#pl"/></svg><svg class="i m3"><use href="#dia"/></svg><svg class="i m9"><use href="#dia"/></svg><i class="sp m10"></i>
    <svg class="i m5"><use href="#pl"/></svg><i class="sp m7"></i><svg class="i m7"><use href="#c-nm"/></svg><i class="sp m21"></i>
    <i class="grip m5"></i><svg class="i m6"><use href="#xmk"/></svg><svg class="i m12"><use href="#env"/></svg><svg class="i m5"><use href="#tray"/></svg><svg class="i m7"><use href="#cubeo"/></svg><svg class="i m7"><use href="#div"/></svg><svg class="i m8"><use href="#eyed"/></svg><i class="sp m6"></i>
    <svg class="i m5"><use href="#slice"/></svg><svg class="i m6"><use href="#info"/></svg><svg class="i m7"><use href="#ang"/></svg><svg class="i m8"><use href="#dim"/></svg><i class="a low m6"></i><i class="sp m6"></i>
    <i class="grip m3"></i><svg class="i m3"><use href="#ptl"/></svg><svg class="i m7"><use href="#ln"/></svg><i class="a m8"></i><svg class="i m6"><use href="#chn"/></svg><svg class="i m7" viewBox="0 0 24 24"><text x="12" y="20" class="sa">A</text></svg><svg class="i m7"><use href="#sf1"/></svg><svg class="i m7"><use href="#cv1"/></svg><svg class="i m8"><use href="#sf2"/></svg><svg class="i m6"><use href="#cv2"/></svg><svg class="i m7"><use href="#sph2"/></svg><svg class="i m7"><use href="#chn2"/></svg><svg class="i m6"><use href="#cyla"/></svg><svg class="i m8"><use href="#cv1"/></svg><svg class="i m7"><use href="#hrt"/></svg><i class="a low m6"></i>
  </div>
</section>

<section class="filter">
  <div class="sel sel1"><span>无选择过滤器</span><b></b></div>
  <div class="sel sel2 m9"><span>整</span></div>
  <i class="a m6"></i><i class="sp m6"></i>
  <span class="selbtn m3"><svg class="i20"><use href="#selb"/></svg></span>
  <svg class="i20 m2"><use href="#cube"/></svg><i class="sp m5"></i>
  <svg class="i20 m4"><use href="#gm"/></svg><svg class="i20 m3"><use href="#gll"/></svg><svg class="i20 m2"><use href="#gll"/></svg><svg class="i20 m3"><use href="#gs1"/></svg><svg class="i20 m4"><use href="#gz"/></svg><svg class="i20 m3"><use href="#gw"/></svg><svg class="i20 m3"><use href="#gt"/></svg><svg class="i20 m3"><use href="#gc"/></svg><svg class="i20 m2"><use href="#go2"/></svg><svg class="i20 m5"><use href="#gp1"/></svg><svg class="i20 m2"><use href="#gll"/></svg><svg class="i20 m2"><use href="#gb1"/></svg><svg class="i20 m2"><use href="#gb2"/></svg><svg class="i20 m5"><use href="#ptl"/></svg><i class="sp m14"></i><svg class="i20 m3"><use href="#grid"/></svg>
  <i class="a fend"></i>
</section>

<section class="cue">
  <span class="cuetext">设置可选类型或选择对象</span>
  <i class="csep c1"></i><i class="csep c2"></i>
  <span class="cicon"></span>
  <span class="cfit"><i></i></span>
  <i class="csep c3"></i>
</section>

<main class="main">
  <aside class="strip">
    <div class="sgear"><svg class="gearic"><use href="#gear"/></svg></div>
    <div class="tab"><svg class="ti"><use href="#t-asm"/></svg></div>
    <div class="tab g3"><svg class="ti"><use href="#t-con"/></svg></div>
    <div class="tab on"><svg class="ti"><use href="#t-part"/></svg></div>
    <div class="tab g2"><svg class="ti"><use href="#t-book"/></svg></div>
    <div class="tab g14"><svg class="ti" viewBox="0 0 24 24"><circle cx="8" cy="16" r="7" fill="#1a70d0"/><text x="8" y="20" class="sb">i</text><path d="M6 6c7-2 13 3 14 11M7 1c9-1 16 6 16 16" stroke="#4870c0" stroke-width="2.400" fill="none"/></svg></div>
    <div class="tab g15"><svg class="ti"><use href="#t-doc"/></svg></div>
    <div class="tab g15"><svg class="ti"><use href="#t-clk"/></svg></div>
    <div class="tab g3"><svg class="ti"><use href="#t-rb"/></svg></div>
    <div class="tab g3"><svg class="ti"><use href="#t-mach"/></svg></div>
    <div class="tab g3"><svg class="ti"><use href="#t-tool"/></svg></div>
  </aside>

  <section class="nav">
    <h2 class="navtitle">部件导航器</h2>
    <div class="tree">
      <div class="thead"><span>名称</span><i class="up"></i></div>
      <div class="rows">
        <div class="tr vl"><i class="ex"></i><svg class="ni m5"><use href="#mv"/></svg><span class="tl m3">模型视图</span></div>
        <div class="tr vl"><i class="ex"></i><svg class="ck m4" viewBox="0 0 16 16"><path d="M1 8l3-2 3 4 7-8 1 2-8 11z" fill="#28a838"/></svg><svg class="ni"><use href="#cam"/></svg><span class="tl m2">摄像机</span></div>
        <div class="tr vl"><i class="ex"></i><svg class="ni m5"><use href="#fold1"/></svg><span class="tl m3">用户表达式</span></div>
        <div class="tr vt"><i class="ex mn"></i><svg class="ni m5"><use href="#fold0"/></svg><span class="tl m3">模型历史记录</span></div>
        <div class="tr el"><i class="cb"><svg viewBox="0 0 16 16"><path d="M2 8l3-2 3 4 6-7 1 2-7 10z" fill="#28a838"/></svg></i><svg class="ni m2"><use href="#bdy"/></svg><span class="tred m2">体 (1)</span><svg class="ck2" viewBox="0 0 16 16"><path d="M1 8l3-2 3 4 7-8 1 2-8 11z" fill="#28a838"/></svg></div>
      </div>
      <div class="hs"><i class="chev l"></i><b class="thumb"></b><i class="chev r"></i></div>
    </div>
    <div class="splitter"><b></b></div>
    <div class="dep"><span>相关性</span><i class="depx"></i></div>
  </section>

  <section class="cols">
    <div class="col c-a">
      <svg class="i"><use href="#c-mirr"/></svg><svg class="i"><use href="#c-nm"/></svg><svg class="i"><use href="#c-box"/></svg>
      <svg class="i" viewBox="0 0 24 24"><use href="#c-nm" width="14" height="14"/><text x="16" y="22" class="sn">名</text></svg>
      <svg class="i"><use href="#c-ck"/></svg><svg class="i"><use href="#c-tb"/></svg><svg class="i"><use href="#c-pg"/></svg><svg class="i"><use href="#c-nw"/></svg>
      <svg class="i" viewBox="0 0 24 24"><use href="#c-nm" width="14" height="14"/><text x="15" y="22" class="st">Txt</text></svg>
      <svg class="i"><use href="#c-rt"/></svg><svg class="i"><use href="#c-2"/></svg>
      <svg class="i" viewBox="0 0 24 24"><text x="13" y="20" class="sm">名</text></svg>
      <i class="lt"></i>
    </div>
    <div class="col c-b">
      <svg class="i"><use href="#cp-b"/></svg><svg class="i"><use href="#cp-c"/></svg><svg class="i"><use href="#cp-d"/></svg><span class="ra"><svg class="i"><use href="#cp-e"/></svg><i class="a"></i></span><svg class="i"><use href="#cp-f"/></svg><svg class="i"><use href="#cp-g"/></svg><span class="ra"><svg class="i"><use href="#cp-h"/></svg><i class="a"></i></span>
      <i class="lt"></i>
    </div>
  </section>

  <section class="center">
    <div class="tabbar"><div class="dtab"><span>pr2_24_stp.prt</span><i class="tbox"></i><span class="tx">×</span></div></div>
    <div class="view">
      <svg class="scene" viewBox="480 235 1153 710">
        <defs><path id="part" d="M514 418 523 390 534 387 605 387 629 396 630 400 653 417 689 433Q700 458 731 450L775 467Q786 492 822 487L862 503Q873 530 911 522L948 537Q960 570 1000 557L1150 617Q1160 650 1202 637L1238 652Q1250 683 1288 672L1328 688Q1340 715 1375 706L1417 723Q1430 748 1460 740L1593 798 1607 807 1582 858 1540 845 1427 803 1420 792Q1405 778 1385 787L1343 770Q1325 735 1295 752L1257 737Q1240 695 1207 716L1170 700Q1152 658 1117 680L968 620Q950 585 917 602L881 587Q865 547 829 567L791 550Q774 518 745 533L701 515Q685 487 657 498L588 478 563 470 515 428Z"/></defs>
        <path d="M563 477 565 470 588 478 600 485 588 492Z" fill="#3a8a90"/>
        <use href="#part" x="0" y="2.500" fill="#5a4810" stroke="#3a2e00" stroke-width=".6"/>
        <use href="#part" x="0" y="1.200" fill="#e8c830"/>
        <use href="#part" fill="#fda922" stroke="#5a4208" stroke-width=".6"/>
        <path d="M538 387H603V393H550Z" fill="#eeb838" stroke="#5a4208" stroke-width=".7"/>
        <path d="M515 422 531 427 568 462 563 470 515 428Z" fill="#f4b830" stroke="#4a3608" stroke-width=".8"/>
        <path d="M628 398 617 418 573 416 567 425 599 456 588 478" fill="none" stroke="#4a3608" stroke-width="1"/>
        <g fill="#e6e7e7" stroke="#a86a28" stroke-width="1.800">
          <ellipse cx="654" cy="457" rx="9" ry="8"/><ellipse cx="741" cy="491" rx="9" ry="8"/><ellipse cx="828" cy="526" rx="9" ry="8"/><ellipse cx="915" cy="561" rx="9" ry="8"/><ellipse cx="1002" cy="595" rx="9" ry="8"/>
        </g>
        <path d="M1527 780 1563 793 1543 835 1508 818Q1508 792 1527 780Z" fill="#eaeaea" stroke="#3a3008" stroke-width="1"/>
        <path d="M1533 783 1563 795 1543 834 1510 818 1513 812Z" fill="#f0a81e" stroke="#6a5010" stroke-width="1"/>
        <path d="M1538 793 1558 802 1552 812 1537 806ZM1530 807 1548 816 1542 828 1526 820Z" fill="#fbb030" stroke="#6a5010"/>
        <path d="M1570 807 1592 817 1583 838 1562 832Z" fill="#e6e7e8" stroke="#2f8a70" stroke-width="2" stroke-linejoin="round"/>
        <path d="M1592 819 1584 838 1580 836 1589 818Z" fill="#b86a3a"/>
        <path d="M1066 620 1064 605 1068 593 1071 605Z" fill="#10308a"/>
        <path d="M1066 620 1080 590 1084 592Z" fill="#b8e8a8"/><path d="M1085 581 1080 592 1087 590Z" fill="#3a9a50"/>
        <path d="M1068 625 1115 644 1098 643 1080 633Z" fill="#f4b8b0"/>
        <text x="1067" y="578" class="lb g">YC</text><text x="1052" y="592" class="lb p">ZC</text><text x="1101" y="659" class="lb o">XC</text>
        <path d="M549 923 565 915 578 925 570 945H552Z" fill="#cfd0d0" stroke="#a0a0a0"/><path d="M552 940 574 930M560 918 567 934" stroke="#a8a8a8" fill="none"/>
        <path d="M549 923 553 916 558 920 552 945H547Z" fill="#a8c8a0"/>
        <path d="M543 945 545 930 543 929 546 921 549 929 547 930 546 945Z" fill="#10308a"/>
        <text x="556" y="913" class="lt2 g">Y</text><text x="541" y="925" class="lt2 p">Z</text>
      </svg>
    </div>
  </section>

  <aside class="right">
    <i class="rgrip"></i>
    <svg class="i" viewBox="0 0 24 24"><path d="M11 11V1M11 11l10-1M11 11l-6 7" stroke="#a02020" stroke-width="1.500" fill="none"/><path d="M2 11 7 3" stroke="#c88040" stroke-width="2"/><path d="M3 22V9" stroke="#2030a0" stroke-width="1.500"/><text x="7" y="23" class="sx">ABS</text></svg>
    <svg class="i"><use href="#r-x"/></svg><svg class="i"><use href="#r-l"/></svg><svg class="i"><use href="#r-r"/></svg><svg class="i"><use href="#r-bs"/></svg><svg class="i"><use href="#r-pc"/></svg><svg class="i"><use href="#r-xs"/></svg><svg class="i"><use href="#r-st"/></svg><svg class="i"><use href="#r-rc"/></svg><svg class="i"><use href="#r-pk"/></svg><span class="ra"><svg class="i"><use href="#r-rect"/></svg><i class="a m2"></i></span><span class="ra"><svg class="i"><use href="#r-hex"/></svg><i class="a m2"></i></span>
    <svg class="i" viewBox="0 0 24 24"><path d="M13 0h4l-1 6h-2z" fill="#e8c840"/><text x="12" y="19" class="sr" transform="rotate(-18 12 16)">Text</text></svg>
    <svg class="i"><use href="#r-ds"/></svg><svg class="i"><use href="#r-lp"/></svg><svg class="i"><use href="#r-c"/></svg>
    <i class="lt"></i>
  </aside>
</main>

<div class="dialog">
  <div class="dhead"><svg class="dgear"><use href="#gear"/></svg><span class="dtitle">按类型选择</span><span class="dclose">✕</span></div>
  <div class="dbody">
    <div class="dlist"><div class="opt">基准</div><div class="opt">实体</div></div>
    <div class="dfilter">细节过滤</div>
    <div class="dsep"></div>
    <div class="dbtns"><span class="dbtn ok">确定</span><span class="dbtn">返回</span><span class="dbtn">取消</span></div>
  </div>
  <div class="dfoot"></div>
</div>

<div class="wm">
  <svg class="wmhex" viewBox="0 0 72 84"><path d="M36 0 72 21V63L36 84 0 63V21Z" fill="#a5d6f2"/><path d="M36 0 72 21V40C60 18 48 8 36 0Z" fill="#cce6f6"/><path d="M0 21 36 0C20 10 8 28 6 56L0 63Z" fill="#b4dcf4"/><path d="M0 63C20 74 50 72 72 48V63L36 84Z" fill="#7cc4ee"/><path d="M36 24 54 34V52L36 62 18 52V34Z" fill="#b8e0f8" stroke="#e4eef4" stroke-width="1.500"/><path d="M36 44 54 34V52L36 62Z" fill="#8acaf0"/><path d="M36 44 18 34 36 24 54 34Z" fill="#d0ecfa"/></svg>
  <div class="wmt"><div class="wm1">3D世界网</div><div class="wm2">WWW.3DSJW.COM</div></div>
</div>
<div class="corner"><i></i></div>
</body></html>
```
FILE: styles.css
```css
*{box-sizing:border-box}
html,body{margin:0;padding:0}
body{width:1680px;height:945px;overflow:hidden;background:#d2d2d2;font:12px "Liberation Sans","Noto Sans CJK SC",sans-serif;color:#222;display:flex;flex-direction:column;position:relative}
i{display:block;font-style:normal}
.defs{position:absolute;width:0;height:0}
.m1{margin-left:1px}.m2{margin-left:2px}.m3{margin-left:3px}.m4{margin-left:4px}.m5{margin-left:5px}.m6{margin-left:6px}.m7{margin-left:7px}.m8{margin-left:8px}.m9{margin-left:9px}.m10{margin-left:10px}.m11{margin-left:11px}.m12{margin-left:12px}.m14{margin-left:14px}.m21{margin-left:21px}

.titlebar{height:27px;flex:none;display:flex;align-items:center;background:linear-gradient(#555 0,#555 3px,#1a1a1a 3px,#1a1a1a 26px,#000 26px);padding:3px 1px 1px 3px;color:#fff;position:relative}
.titlebar::before{content:"";position:absolute;left:720px;top:0;width:241px;height:1px;background:linear-gradient(90deg,#5b7a3c 0,#5b7a3c 48px,#e8e8e8 48px)}
.tlogo{width:17px;height:17px}
.ttext{margin:-3px 0 0 3px;font-size:13px;color:#eee}
.brand{margin-left:auto;margin-right:15px;font-weight:bold;font-size:12.5px;letter-spacing:.6px;font-family:"DejaVu Sans",sans-serif;transform:scaleX(.9)}
.wb{width:20px;height:19px;margin-left:4px;border:1px solid #777;border-radius:3px;background:linear-gradient(#666,#2a2a2a);display:flex;align-items:center;justify-content:center}
.wmin{width:8px;height:3px;background:#fff;margin-top:7px}
.wsv{width:11px;height:11px}
.wsv2{width:12px;height:12px}
.wclose{background:linear-gradient(#e88060,#c8482c);border-color:#b86040;width:21px}

.menu{height:28px;flex:none;display:flex;align-items:center;gap:12.4px;padding:0 0 2px 4px;background:#e2e2e2;border-bottom:1px solid #c4c4c4;font-size:12px;color:#333}
.first{margin-left:-5.400px}.pref{margin-left:9px}.gc{margin-left:2px}
.mi{white-space:nowrap}
.grip{width:3px;height:24px;flex:none;background:repeating-linear-gradient(#9c9c9c 0 2px,transparent 2px 4px)}

.toolbars{flex:none;height:102px;background:linear-gradient(#e1e1e1,#cbcbcb);box-shadow:0 1px 1px #6f6f6f;position:relative;z-index:1}
.row{display:flex;align-items:center;padding-left:4px;border-bottom:1px solid #cfcfcf}
.r1{height:33px}.r2{height:35px}.r3{height:34px;border-bottom:0}
.r1{width:1226px;border-right:1px solid #c4c4c4;background:#e0e0e0}
.r2{width:1121px;border-right:1px solid #c4c4c4;background:#dadada}
.r3{width:1200px;background:#d4d4d4}
.i{width:24px;height:24px;flex:none;display:block}
.i20{width:20px;height:20px;flex:none;display:block}
.a{width:0;height:0;flex:none;border:3px solid transparent;border-top:4px solid #222;border-bottom:0}
.low{transform:translateY(6px)}
.sp{width:1px;height:28px;flex:none;background:#f4f4f4;box-shadow:-1px 0 0 #c0c0c0}
.btxt{width:24px;flex:none;font-size:12px;white-space:nowrap}
.search{width:143px;height:23px;flex:none;background:#fff;border:1px solid #bbb;border-radius:2px;display:flex;align-items:center;justify-content:space-between;padding:0 4px;font-size:12px}
.smag{width:16px;height:16px}
.spin{width:50px;height:21px;flex:none;background:#fff;border:1px solid #8a9ab0;border-radius:3px;display:flex;align-items:center;justify-content:space-between;padding-left:3px;font-size:13px}
.sbtn{width:17px;height:19px;background:linear-gradient(#dce8f8,#4a7ac0);position:relative}
.sbtn::after{content:"";position:absolute;left:3px;top:7px;border:5px solid transparent;border-top:6px solid #1a2a5a;border-bottom:0}

.filter{height:33px;flex:none;display:flex;align-items:center;padding-left:6px;background:linear-gradient(#b9b9b9,#d4d4d4 45%,#dcdcdc);border-bottom:1px solid #f2f2f2}
.sel{height:22px;flex:none;border:1px solid #aaa;border-radius:3px;display:flex;align-items:center;padding-left:3px;font-size:12px}
.sel1{width:146px;color:#aaa;justify-content:space-between;background:#d6d6d6}
.sel1 b{width:16px;height:20px;background:linear-gradient(#eee,#ccc);position:relative}
.sel1 b::after{content:"";position:absolute;left:3px;top:7px;border:5px solid transparent;border-top:6px solid #999;border-bottom:0}
.sel2{width:337px;background:#fff;color:#222}
.selbtn{width:22px;height:24px;flex:none;background:#f4f4f4;border:1px solid #444;border-radius:3px;display:flex;align-items:center;justify-content:center}
.fend{margin-left:auto;margin-right:6px}

.cue{height:22px;flex:none;display:flex;align-items:center;padding:0 0 2px 3px;background:#d8d8d8;border-bottom:1px solid #8f8f8f;font-size:12px;font-weight:bold;color:#222;position:relative}
.cuetext{white-space:nowrap}
.csep{position:absolute;top:0;bottom:0;width:1px;background:#f2f2f2}
.c1{left:791px}.c2{left:1582px}.c3{left:1678px}
.cicon{position:absolute;left:1605px;top:3px;width:16px;height:16px;background:#80939c}
.cfit{position:absolute;left:1625px;top:3px;width:16px;height:16px;border:1px solid #fff;display:flex;align-items:center;justify-content:center}
.cfit i{width:9px;height:8px;background:linear-gradient(#2a5aa0 0 2px,#8ab0e0 2px);border:1px solid #2a4a80}

.main{flex:1;display:flex;min-height:0}
.strip{width:31px;flex:none;background:linear-gradient(#dcdcdc 0,#c4c4c4 36px,#b0b0b0 60px);display:flex;flex-direction:column;align-items:flex-end}
.sgear{width:31px;height:45px;flex:none;display:flex;align-items:flex-start;justify-content:center;padding:8px 0 0}
.gearic{width:14px;height:14px;color:#333}
.tab{width:26px;height:40px;flex:none;background:linear-gradient(#f0f0f0,#c8c8c8);border:1px solid #777;border-right:0;border-radius:4px 0 0 4px;display:flex;align-items:center;justify-content:center}
.tab.on{width:28px;height:41px;background:#ececec}
.g2{margin-top:2px}.g3{margin-top:3px}.g14{margin-top:14px}.g15{margin-top:15px}
.ti{width:24px;height:24px}

.nav{width:367px;flex:none;background:#efefef;display:flex;flex-direction:column;padding:0 9px 0 7px;box-shadow:inset 1px 0 #888}
.navtitle{height:30px;margin:0;flex:none;font-size:12px;font-weight:bold;line-height:29px;padding-left:5px}
.tree{height:680px;flex:none;border:1px solid #6a6a6a;background:#fff;display:flex;flex-direction:column}
.thead{height:22px;flex:none;display:flex;align-items:center;gap:14px;padding:0 0 2px 7px;background:linear-gradient(#f4f4f4,#dedede);font-size:12px;color:#333}
.up{border:5px solid transparent;border-bottom:5px solid #222;border-top:0}
.rows{flex:1;background:linear-gradient(90deg,transparent 200px,#e2e2e2 200px,#e2e2e2 201px,transparent 201px,transparent 300px,#e2e2e2 300px,#e2e2e2 301px,transparent 301px),repeating-linear-gradient(#fff 0 19px,#e4e4e4 19px 20px,#f5f5f5 20px 39px,#e4e4e4 39px 40px)}
.tr{height:20px;display:flex;align-items:center;padding:0 0 2px 5px;position:relative;color:#444}
.ex{width:9px;height:9px;flex:none;border:1px solid #8a8a8a;background:linear-gradient(90deg,transparent 3px,#333 3px,#333 4px,transparent 4px),linear-gradient(transparent 3px,#333 3px,#333 4px,transparent 4px),#fff;z-index:1}
.ex.mn{background:linear-gradient(transparent 3px,#333 3px,#333 4px,transparent 4px),#fff}
.vl::before,.vt::before{content:"";position:absolute;left:9px;top:0;height:20px;border-left:1px dotted #999}
.vt::before{height:10px}
.el::before{content:"";position:absolute;left:29px;top:-9px;width:10px;height:20px;border-left:1px dotted #888;border-bottom:1px dotted #888}
.ni{width:16px;height:16px;flex:none}
.ck{width:13px;height:13px;flex:none}
.tl{font-size:12px;white-space:nowrap}
.cb{width:13px;height:13px;flex:none;margin-left:35px;border:1px solid #111;background:#fff;display:flex}
.cb svg{width:11px;height:11px}
.tred{color:#e05050;font-weight:bold;white-space:nowrap}
.ck2{position:absolute;left:207px;top:3px;width:13px;height:13px}
.hs{height:18px;flex:none;display:flex;align-items:center;background:#eee;position:relative}
.thumb{position:absolute;left:18px;top:1px;width:271px;height:15px;background:#c8c8c8}
.chev{position:absolute;width:7px;height:7px;top:5px;border-left:2px solid #333;border-bottom:2px solid #333;transform:rotate(45deg)}
.chev.l{left:7px}.chev.r{right:7px;transform:rotate(225deg)}
.splitter{height:13px;flex:none;position:relative;background:linear-gradient(transparent 5px,#b0b0b0 5px,#b0b0b0 6px,transparent 6px)}
.splitter b{position:absolute;left:144px;top:2px;width:64px;height:7px;background:#ddd;border:1px solid #aaa}
.dep{flex:1;background:#fff;display:flex;align-items:flex-start;padding-left:6px;font-size:12px;border-top:1px solid #ddd;position:relative;line-height:16px;margin:0 1px}
.depx{position:absolute;right:0;top:0;width:24px;height:12px;background:#eee;border-left:1px solid #bbb}
.depx::after{content:"";position:absolute;left:7px;top:1px;width:7px;height:7px;border-right:2px solid #444;border-bottom:2px solid #444;transform:rotate(45deg)}

.cols{width:82px;flex:none;display:flex;align-items:flex-start;background:#d2d2d2;padding-left:1px;gap:1px}
.col{flex:none;display:flex;flex-direction:column;background:#e4e4e4;border-right:1px solid #c8c8c8;border-bottom:1px solid #c8c8c8}
.c-a{width:33px;height:486px;padding:101px 0 0 5px}
.c-b{width:46px;height:332px;padding:102px 0 0 11px}
.col .i,.col .ra{height:30.8px;padding:3px 0}
.ra{display:flex;align-items:center;flex:none}
.col .ra .i{height:24px;padding:0}
.lt{border:3px solid transparent;border-right:4px solid #222;border-left:0;width:0;margin-top:6px}

.center{flex:1;display:flex;flex-direction:column;min-width:0}
.tabbar{height:23px;flex:none;background:#f0f0f0;border-bottom:2px solid #666;display:flex}
.dtab{width:144px;background:#666;color:#eee;font-size:13px;display:flex;align-items:center;padding:0 0 2px 26px;height:23px}
.tbox{width:9px;height:9px;border:1.500px solid #eee;margin-left:6px}
.tx{margin-left:5px;font-size:15px;color:#ddd}
.view{flex:1;min-height:0;background:linear-gradient(#b4b6b7,#c6c8c9 30%,#dcdede 65%,#e9eaeb);position:relative}
.scene{position:absolute;inset:0;width:100%;height:100%;display:block}
.lb{font:13px "Liberation Sans",sans-serif}
.lt2{font:11px "Liberation Sans",sans-serif}
.g{fill:#2f8a58}.p{fill:#5a4ac8}.o{fill:#d83a18}

.right{width:47px;flex:none;display:flex;flex-direction:column;align-self:flex-start;height:511px;background:#e6e6e6;border-left:1px solid #b8b8b8;border-bottom:1px solid #c8c8c8;padding:2px 0 0 9px;margin-top:1px}
.right .i,.right .ra{height:31px;padding:3px 0;flex:none}
.right .ra .i{height:24px;padding:0}
.rgrip{height:2px;width:35px;margin:3px 0 2px -4px;flex:none;background:repeating-linear-gradient(90deg,#999 0 2px,transparent 2px 4px)}

.dialog{position:absolute;left:170px;top:137px;width:328px;height:169px;display:flex;flex-direction:column;z-index:5;background:#e8e8e8;border-radius:6px 6px 4px 4px;overflow:hidden}
.dhead{height:21px;flex:none;display:flex;align-items:center;background:linear-gradient(#4a4a4a 0,#2a2a2a 7px,#0e0e0e 8px,#111);position:relative}
.dgear{width:14px;height:14px;margin-left:4px;color:#fff}
.dtitle{margin-left:3px;padding-left:5px;border-left:1px solid #777;color:#ddd;font-size:12.5px;line-height:21px;position:relative;top:1px}
.dclose{margin-left:auto;width:21px;border-left:1px solid #777;text-align:center;color:#fff;font-weight:bold;font-size:14px;line-height:21px}
.dbody{flex:1;padding:9px 10px 0;display:flex;flex-direction:column}
.dlist{height:60px;flex:none;background:#fff;border:1px solid #666;padding:1px}
.opt{height:17px;background:#0a70d2;color:#dfeefc;font-size:12.500px;line-height:17px;padding-left:1px;border-bottom:1px dotted #7ab4ea}
.opt+.opt{height:16px;border-bottom:0}
.dfilter{height:27px;flex:none;margin-top:2px;border:1px solid #888;border-radius:3px;background:linear-gradient(#f0f0f0,#aaa 50%,#e8e8e8);text-align:center;line-height:25px;font-size:12px}
.dsep{height:1px;flex:none;margin-top:8px;background:#ccc}
.dbtns{flex:none;display:flex;justify-content:flex-end;gap:8px;margin-top:5px;padding-right:8px}
.dbtn{width:51px;height:23px;border:1px solid #777;border-radius:4px;background:linear-gradient(#f4f4f4,#b8b8b8 55%,#e4e4e4);text-align:center;line-height:21px;font-size:12px}
.ok{background:linear-gradient(#d8f4c8,#6cc85c 55%,#a8e8a0);border-color:#3a8a3a}
.dfoot{height:7px;flex:none;background:#111}

.wm{position:absolute;left:1397px;top:849px;display:flex;gap:9px;z-index:3;pointer-events:none}
.wmhex{width:72px;height:84px;flex:none}
.wmt{color:rgba(255,255,255,.55)}
.wm1{font:bold 40px/40px "Noto Sans CJK SC","Liberation Sans",sans-serif;margin-top:12px;letter-spacing:1px;white-space:nowrap}
.wm2{font:bold 12px/12px "Liberation Sans",sans-serif;letter-spacing:4.800px;margin-top:7px;white-space:nowrap}
.corner{position:absolute;right:0;bottom:0;width:10px;height:38px;background:#33393f;border-radius:2px 0 0 0;z-index:4;padding:4px 3px}
.corner i{width:3px;height:100%;background:#4a6a8a}

.sa{font:bold 24px "Liberation Serif",serif;text-anchor:middle;fill:#111}
.sb{font:bold 11px "Liberation Sans",sans-serif;text-anchor:middle;fill:#fff}
.sn{font:bold 13px "Noto Sans CJK SC",sans-serif;text-anchor:middle;fill:#1030d0}
.sm{font:bold 20px "Noto Sans CJK SC",sans-serif;text-anchor:middle;fill:#0a20d0}
.st{font:italic bold 9px "Liberation Serif",serif;text-anchor:middle;fill:#7030a0}
.sx{font:bold 7px "Liberation Sans",sans-serif;fill:#101050}
.sr{font:italic bold 11px "Liberation Serif",serif;text-anchor:middle;fill:#7030a0}
```
